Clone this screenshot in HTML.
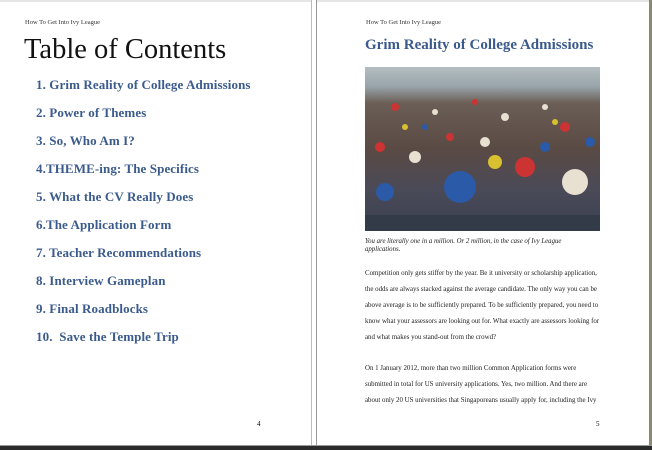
<!DOCTYPE html>
<html><head><style>
body{margin:0;width:652px;height:450px;background:#fff;position:relative;overflow:hidden;font-family:"Liberation Serif",serif;}
.a{position:absolute;white-space:nowrap}
.hd{font-size:6.5px;color:#333}
.toc{font-size:13px;font-weight:bold;color:#3b5b8c;left:36px;letter-spacing:0.1px}
.bd{font-size:6.9px;color:#222;left:365px}
</style></head><body>
<div class="a" style="left:0;top:0;width:652px;height:2px;background:#e6e6e6"></div>
<div class="a" style="left:311px;top:0;width:4px;height:450px;background:#fff;border-left:1px solid #bbb;border-right:1px solid #999"></div>
<div class="a" style="left:649px;top:0;width:3px;height:450px;background:#8a8a70"></div>
<div class="a" style="left:0;top:445px;width:652px;height:1px;background:#999"></div>
<div class="a" style="left:0;top:446px;width:652px;height:4px;background:#2b2b2b"></div>

<div class="a hd" style="left:25px;top:19px">How To Get Into Ivy League</div>
<div class="a" style="left:24px;top:34px;font-size:28.5px;color:#111">Table of Contents</div>
<div class="a toc" style="top:77px">1. Grim Reality of College Admissions</div>
<div class="a toc" style="top:105px">2. Power of Themes</div>
<div class="a toc" style="top:133px">3. So, Who Am I?</div>
<div class="a toc" style="top:161px">4.THEME-ing: The Specifics</div>
<div class="a toc" style="top:189px">5. What the CV Really Does</div>
<div class="a toc" style="top:217px">6.The Application Form</div>
<div class="a toc" style="top:245px">7. Teacher Recommendations</div>
<div class="a toc" style="top:273px">8. Interview Gameplan</div>
<div class="a toc" style="top:301px">9. Final Roadblocks</div>
<div class="a toc" style="top:329px">10.&nbsp;&nbsp;Save the Temple Trip</div>
<div class="a" style="left:257px;top:420px;font-size:7px">4</div>

<div class="a hd" style="left:366px;top:19px">How To Get Into Ivy League</div>
<div class="a" style="left:365px;top:37px;font-size:15px;font-weight:bold;color:#3b5b8c">Grim Reality of College Admissions</div>
<div class="a" style="left:365px;top:67px;width:235px;height:164px;background:linear-gradient(180deg,#b4bec2 0%,#98a4aa 12%,#6a5e56 22%,#5a4a44 50%,#4a4a58 75%,#3a4050 100%);overflow:hidden">
<svg width="235" height="164">
<g fill="#c33"><circle cx="30" cy="40" r="4"/><circle cx="160" cy="100" r="10"/><circle cx="110" cy="35" r="3"/><circle cx="200" cy="60" r="5"/><circle cx="85" cy="70" r="4"/><circle cx="15" cy="80" r="5"/></g>
<g fill="#e8e0d0"><circle cx="70" cy="45" r="3"/><circle cx="140" cy="50" r="4"/><circle cx="210" cy="115" r="13"/><circle cx="50" cy="90" r="6"/><circle cx="180" cy="40" r="3"/><circle cx="120" cy="75" r="5"/></g>
<g fill="#2a5aa8"><circle cx="95" cy="120" r="16"/><circle cx="180" cy="80" r="5"/><circle cx="20" cy="125" r="9"/><circle cx="60" cy="60" r="3"/><circle cx="225" cy="75" r="5"/></g>
<g fill="#d8c030"><circle cx="130" cy="95" r="7"/><circle cx="40" cy="60" r="3"/><circle cx="190" cy="55" r="3"/></g>
<rect x="0" y="148" width="235" height="16" fill="#333a48"/>
</svg></div>
<div class="a" style="left:365px;top:238px;font-size:6.8px;font-style:italic;color:#222;line-height:8px">You are literally one in a million. Or 2 million, in the case of Ivy League<br>applications.</div>
<div class="a bd" style="top:266px;line-height:16px">Competition only gets stiffer by the year. Be it university or scholarship application,<br>the odds are always stacked against the average candidate. The only way you can be<br>above average is to be sufficiently prepared. To be sufficiently prepared, you need to<br>know what your assessors are looking out for. What exactly are assessors looking for<br>and what makes you stand-out from the crowd?</div>
<div class="a bd" style="top:361px;line-height:16px">On 1 January 2012, more than two million Common Application forms were<br>submitted in total for US university applications. Yes, two million. And there are<br>about only 20 US universities that Singaporeans usually apply for, including the Ivy</div>
<div class="a" style="left:596px;top:420px;font-size:7px">5</div>
</body></html>
